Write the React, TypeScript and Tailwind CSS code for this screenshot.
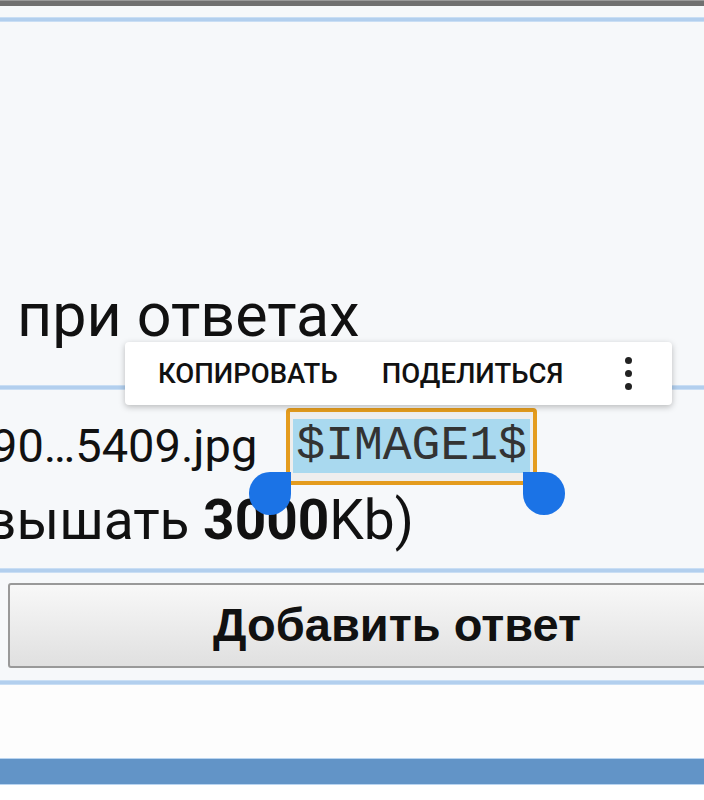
import React from 'react';

// Blue divider line used between form rows
const Divider: React.FC = () => (
  <div className="h-[5px] bg-[#b2cfee] border-y border-[#c9def4]"></div>
);

// Selection handle (teardrop)
const Handle: React.FC<{ side: 'left' | 'right' }> = ({ side }) => (
  <div
    className={`absolute top-[64px] w-[42px] h-[43px] bg-[#1b73e6] rounded-full ${
      side === 'left' ? '-left-[37px] rounded-tr-none' : '-right-[28px] rounded-tl-none'
    }`}
  ></div>
);

// Floating text selection toolbar
const SelectionToolbar: React.FC = () => (
  <div className="absolute left-[125px] top-[342px] w-[547px] h-[63px] bg-white rounded-[4px] shadow-[0_2px_6px_rgba(0,0,0,0.25)] flex items-center font-['Roboto',sans-serif] font-medium text-[27.5px] text-[#111]">
    <span className="ml-[33px]">КОПИРОВАТЬ</span>
    <span className="ml-[44px]">ПОДЕЛИТЬСЯ</span>
    <div className="ml-auto mr-[40px] flex flex-col gap-[6px]">
      <div className="w-[7px] h-[7px] rounded-full bg-[#222]"></div>
      <div className="w-[7px] h-[7px] rounded-full bg-[#222]"></div>
      <div className="w-[7px] h-[7px] rounded-full bg-[#222]"></div>
    </div>
  </div>
);

export default function App() {
  return (
    <div className="relative w-[704px] h-[800px] overflow-hidden bg-white font-['Roboto',sans-serif] text-[#111]">
      <div className="h-[6px] bg-[#707070] border-t border-[#9a9a9a]"></div>
      <div className="bg-[#f6f8fa]">
        <div className="h-[11px]"></div>
        <Divider />
        <div className="h-[261px]"></div>
        <div className="h-[64px] leading-[64px] text-[61px] pl-[17px] whitespace-nowrap">при ответах</div>
        <div className="h-[38px]"></div>
        <Divider />
        <div className="h-[19px]"></div>
        <div className="h-[74px] leading-[74px] text-[47px] whitespace-nowrap ml-[-9px]">
          90…5409.jpg
          <span className="relative inline-block align-top ml-[29px] mt-[-1px]">
            <span className="block border-[4px] border-[#e49c1e] rounded-[4px] bg-[#eeeeee] pt-[7px] pb-[8px] px-[3px]">
              <span className="block bg-[#a9d9ef] h-[54px] leading-[54px] px-[3px] font-['Liberation_Mono',monospace] text-[48px] text-[#333]">
                $IMAGE1$
              </span>
            </span>
            <Handle side="left" />
            <Handle side="right" />
          </span>
        </div>
        <div className="h-[74px] leading-[74px] text-[55px] whitespace-nowrap ml-[-15px]">
          вышать <span className="font-bold">3000</span>Kb)
        </div>
        <div className="h-[11px]"></div>
        <Divider />
        <div className="h-[10px]"></div>
        <div className="pl-[8px]">
          <button className="w-[778px] h-[85px] border-2 border-[#999] rounded-[3px] bg-gradient-to-b from-[#f8f8f8] to-[#e0e0e0] text-center font-['Liberation_Sans',sans-serif] font-bold text-[47px] text-[#111]">
            Добавить ответ
          </button>
        </div>
        <div className="h-[12px]"></div>
        <Divider />
      </div>
      <div className="h-[73px] bg-[#fdfdfd]"></div>
      <div className="h-[27px] bg-[#6294c7] border-y border-[#b9d4f0]"></div>
      <SelectionToolbar />
    </div>
  );
}
